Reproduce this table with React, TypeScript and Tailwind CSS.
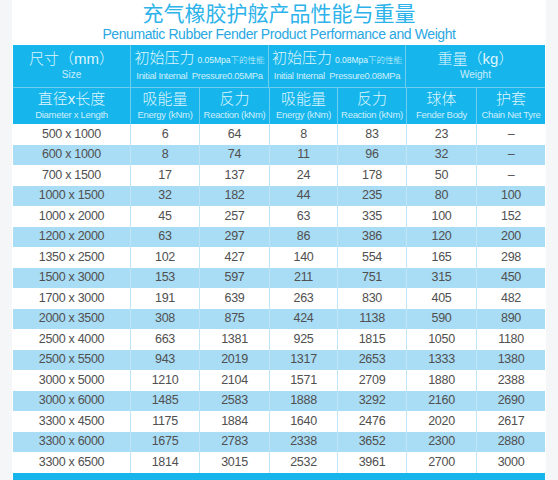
import React from "react";

const rows: string[][] = [
  ["500 x 1000", "6", "64", "8", "83", "23", "–"],
  ["600 x 1000", "8", "74", "11", "96", "32", "–"],
  ["700 x 1500", "17", "137", "24", "178", "50", "–"],
  ["1000 x 1500", "32", "182", "44", "235", "80", "100"],
  ["1000 x 2000", "45", "257", "63", "335", "100", "152"],
  ["1200 x 2000", "63", "297", "86", "386", "120", "200"],
  ["1350 x 2500", "102", "427", "140", "554", "165", "298"],
  ["1500 x 3000", "153", "597", "211", "751", "315", "450"],
  ["1700 x 3000", "191", "639", "263", "830", "405", "482"],
  ["2000 x 3500", "308", "875", "424", "1138", "590", "890"],
  ["2500 x 4000", "663", "1381", "925", "1815", "1050", "1180"],
  ["2500 x 5500", "943", "2019", "1317", "2653", "1333", "1380"],
  ["3000 x 5000", "1210", "2104", "1571", "2709", "1880", "2388"],
  ["3000 x 6000", "1485", "2583", "1888", "3292", "2160", "2690"],
  ["3300 x 4500", "1175", "1884", "1640", "2476", "2020", "2617"],
  ["3300 x 6000", "1675", "2783", "2338", "3652", "2300", "2880"],
  ["3300 x 6500", "1814", "3015", "2532", "3961", "2700", "3000"],
];

const cjk = { fontFamily: '"Liberation Sans", "Noto Sans CJK SC", sans-serif' };

function Sub({ cn, en }: { cn: string; en: string }) {
  return (
    <div className="flex flex-col items-center justify-center border-l border-[#6fcdf0] first:border-l-0 h-full">
      <div className="text-[15px] leading-[18px] text-[#dff5fd] font-light">{cn}</div>
      <div className="text-[9.5px] leading-[14px] text-[#cdeefc] tracking-[-0.3px] whitespace-nowrap">{en}</div>
    </div>
  );
}

export default function App() {
  return (
    <div className="w-[558px] h-[480px] bg-white overflow-hidden relative" style={cjk}>
      <div className="absolute left-0 top-0 w-[12px] h-full bg-[#f4f6f7]" />
      <div className="absolute right-0 top-0 w-[12px] h-full bg-[#f4f6f7]" />
      <div className="relative flex flex-col items-center pt-[2px]">
        <div className="text-[21px] leading-[24px] text-[#2db3ea] font-normal">
          充气橡胶护舷产品性能与重量
        </div>
        <div className="text-[14px] leading-[17px] text-[#2aa8e2] tracking-[-0.4px]">
          Penumatic Rubber Fender Product Performance and Weight
        </div>
      </div>
      <div className="relative ml-[13px] mt-[2px] w-[532px]">
        {/* header row 1 */}
        <div className="grid grid-cols-[117px_138px_137px_140px] h-[43px] bg-[#16b5ec] border-b border-[#6fcdf0]">
          <div className="flex flex-col items-center justify-center">
            <div className="text-[15px] leading-[18px] text-[#dff5fd] font-light">尺寸（mm）</div>
            <div className="text-[10px] leading-[14px] text-[#cdeefc]">Size</div>
          </div>
          <div className="flex flex-col items-center justify-center border-l border-[#6fcdf0]">
            <div className="leading-[18px] text-[#dff5fd] whitespace-nowrap font-light">
              <span className="text-[15px]">初始压力</span>
              <span className="text-[8.5px] ml-[3px]">0.05Mpa下的性能</span>
            </div>
            <div className="text-[9.5px] leading-[14px] text-[#cdeefc] tracking-[-0.35px] whitespace-nowrap">
              Initial Internal&nbsp;&nbsp;Pressure0.05MPa
            </div>
          </div>
          <div className="flex flex-col items-center justify-center border-l border-[#6fcdf0]">
            <div className="leading-[18px] text-[#dff5fd] whitespace-nowrap font-light">
              <span className="text-[15px]">初始压力</span>
              <span className="text-[8.5px] ml-[3px]">0.08Mpa下的性能</span>
            </div>
            <div className="text-[9.5px] leading-[14px] text-[#cdeefc] tracking-[-0.35px] whitespace-nowrap">
              Initial Internal&nbsp;&nbsp;Pressure0.08MPa
            </div>
          </div>
          <div className="flex flex-col items-center justify-center border-l border-[#6fcdf0]">
            <div className="text-[15px] leading-[18px] text-[#dff5fd] font-light">重量（kg）</div>
            <div className="text-[10px] leading-[14px] text-[#cdeefc]">Weight</div>
          </div>
        </div>
        {/* header row 2 */}
        <div className="grid grid-cols-[117px_69px_70px_68px_69px_70px_69px] h-[36px] bg-[#16b5ec]">
          <Sub cn="直径x长度" en="Diameter x Length" />
          <Sub cn="吸能量" en="Energy (kNm)" />
          <Sub cn="反力" en="Reaction (kNm)" />
          <Sub cn="吸能量" en="Energy (kNm)" />
          <Sub cn="反力" en="Reaction (kNm)" />
          <Sub cn="球体" en="Fender Body" />
          <Sub cn="护套" en="Chain Net Tyre" />
        </div>
        {/* body */}
        <div className="flex flex-col">
          {rows.map((r, i) => (
            <div
              key={i}
              className={`grid grid-cols-[117px_69px_70px_68px_69px_70px_69px] h-[20.5px] ${
                i % 2 === 1 ? "bg-[#a9dcf5]" : "bg-white"
              }`}
            >
              {r.map((c, j) => (
                <div
                  key={j}
                  className={`flex items-center justify-center text-[12.5px] text-[#505050] tracking-[-0.3px] ${
                    j > 0 ? "border-l border-[#bfe5f6]" : ""
                  }`}
                >
                  {c}
                </div>
              ))}
            </div>
          ))}
        </div>
        <div className="h-[20px] bg-[#16b5ec]" />
      </div>
    </div>
  );
}
